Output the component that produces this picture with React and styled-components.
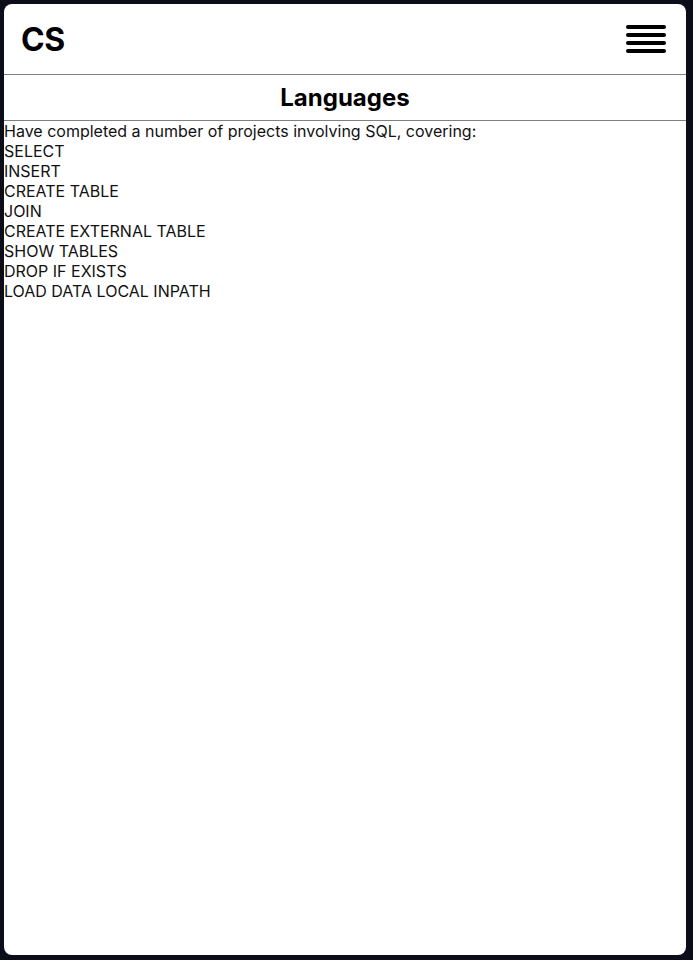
import styled, { createGlobalStyle } from "styled-components";

const GlobalStyle = createGlobalStyle`
  html, body {
    margin: 0;
    padding: 0;
    background: #0b0e18;
  }
  body {
    font-family: Inter, "Noto Sans", sans-serif;
    color: #000;
  }
`;

const Page = styled.div`
  width: 693px;
  height: 960px;
  padding: 4px 7px 5px 4px;
  box-sizing: border-box;
  display: flex;
`;

const Panel = styled.div`
  flex: 1;
  background: #fff;
  border-radius: 8px;
  overflow: hidden;
  display: flex;
  flex-direction: column;
`;

const Header = styled.header`
  height: 71px;
  box-sizing: border-box;
  border-bottom: 1px solid #808080;
  display: flex;
  align-items: center;
  justify-content: space-between;
  padding: 0 20px 0 17px;
`;

const Logo = styled.div`
  font-size: 32px;
  font-weight: 700;
  letter-spacing: -0.3px;
`;

const Burger = styled.button`
  width: 40px;
  height: 28px;
  border: none;
  background: none;
  padding: 0;
  display: flex;
  flex-direction: column;
  justify-content: space-between;
  cursor: pointer;
`;

const Bar = styled.span`
  display: block;
  height: 4px;
  width: 100%;
  background: #000;
  border-radius: 2px;
`;

const SectionTitle = styled.h2`
  margin: 0;
  height: 46px;
  box-sizing: border-box;
  border-bottom: 1px solid #808080;
  display: flex;
  align-items: center;
  justify-content: center;
  font-size: 24px;
  font-weight: 700;
`;

const Body = styled.div`
  font-size: 16px;
  line-height: 20px;
  color: #111;
`;

const Line = styled.div``;

const commands = [
  "SELECT",
  "INSERT",
  "CREATE TABLE",
  "JOIN",
  "CREATE EXTERNAL TABLE",
  "SHOW TABLES",
  "DROP IF EXISTS",
  "LOAD DATA LOCAL INPATH",
];

export default function App() {
  return (
    <>
      <GlobalStyle />
      <Page>
        <Panel>
          <Header>
            <Logo>CS</Logo>
            <Burger aria-label="Menu">
              <Bar />
              <Bar />
              <Bar />
              <Bar />
            </Burger>
          </Header>
          <SectionTitle>Languages</SectionTitle>
          <Body>
            <Line>Have completed a number of projects involving SQL, covering:</Line>
            {commands.map((c) => (
              <Line key={c}>{c}</Line>
            ))}
          </Body>
        </Panel>
      </Page>
    </>
  );
}
